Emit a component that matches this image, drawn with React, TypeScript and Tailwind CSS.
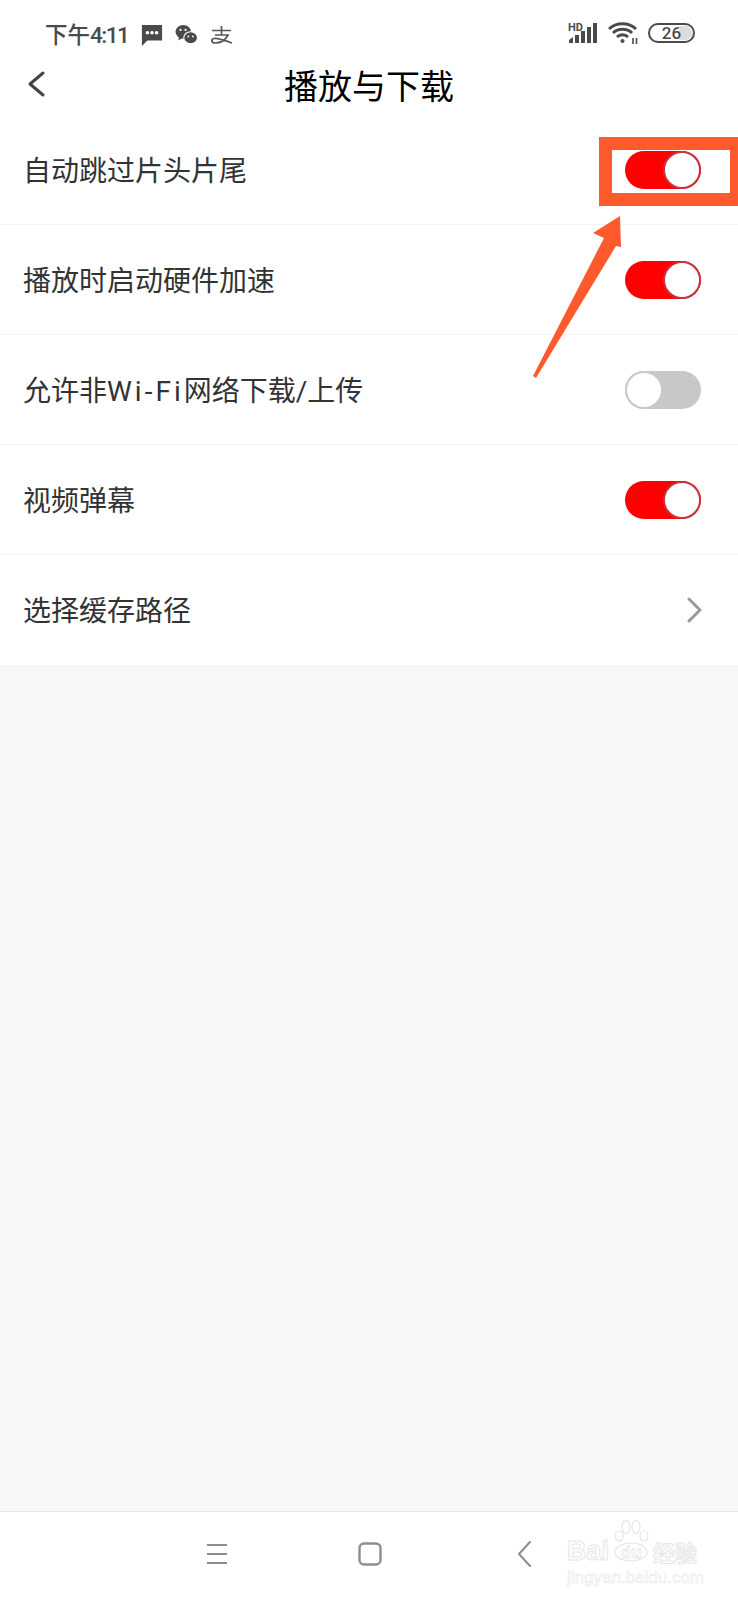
const Toggle = ({ on }: { on: boolean }) => (
    <div className={`flex h-[38px] w-[76px] rounded-full ${on ? "justify-end bg-[#ff0000]" : "justify-start bg-[#c8c8c8]"}`}>
        <div className={`size-[38px] rounded-full border-2 bg-white ${on ? "border-[#c9343c]" : "border-[#c8c8c8]"}`} />
    </div>
);

const rows = [
    { label: <>自动跳过片头片尾</>, on: true },
    { label: <>播放时启动硬件加速</>, on: true },
    { label: <>允许非<span className="tracking-[3px]">Wi-Fi</span>网络下载/上传</>, on: false },
    { label: <>视频弹幕</>, on: true },
];

const App = () => {
    return (
        <div className="relative flex h-[1600px] w-[738px] flex-col overflow-hidden bg-[#f7f7f7] font-['Roboto','Noto_Sans_CJK_SC',sans-serif]">
            <div className="flex h-[115px] flex-col bg-white">
                {/* status bar */}
                <div className="flex h-[64px] items-start justify-between pl-[45px] pr-[43px] pt-[20px] text-[#4a4a4a]">
                    <div className="flex items-center">
                        <span className="text-[22.5px] font-medium leading-[30px]">下午<span className="tracking-[-1.5px]">4:11</span></span>
                        <svg className="ml-[13px]" width="22" height="22" viewBox="0 0 24 24" fill="#4a4a4a">
                            <path d="M1 1h22v17H7l-6 6z" />
                            <circle cx="7" cy="9.500" r="2" fill="#fff" />
                            <circle cx="12" cy="9.500" r="2" fill="#fff" />
                            <circle cx="17" cy="9.500" r="2" fill="#fff" />
                        </svg>
                        <svg className="ml-[12px]" width="23" height="22" viewBox="0 0 24 24" fill="#4a4a4a">
                            <ellipse cx="8.500" cy="8.500" rx="8.500" ry="7.500" />
                            <path d="M4 13l-1 5 5-3z" />
                            <ellipse cx="16.500" cy="15" rx="7.500" ry="6.500" stroke="#fff" strokeWidth="1.200" />
                            <circle cx="5.500" cy="6.500" r="1.200" fill="#fff" />
                            <circle cx="11" cy="6.500" r="1.200" fill="#fff" />
                            <circle cx="14" cy="13.500" r="1" fill="#fff" />
                            <circle cx="19" cy="13.500" r="1" fill="#fff" />
                        </svg>
                        <svg className="ml-[12px]" width="23" height="19" viewBox="0 0 23 19" fill="none" stroke="#555" strokeWidth="1.700">
                            <path d="M2 4.500h19M11.500 0v9M5 9h13c-2 4-6 8-13 8c-4 0-4-4-1-4.500c4-.5 11 2 18 4.500" />
                        </svg>
                    </div>
                    <div className="mt-[1px] flex items-center">
                        <svg width="30" height="22" viewBox="0 0 30 22" fill="#4a4a4a">
                            <text x="0" y="8.500" fontSize="11" fontWeight="700" fontFamily="Roboto">HD</text>
                            <path d="M1 18l4-3v6H1zM7 13h4v8H7zM13 9h4v12h-4zM19 5h4v16h-4zM25 1h4v20h-4z" />
                        </svg>
                        <svg className="ml-[10px]" width="30" height="24" viewBox="0 0 30 24" fill="none" stroke="#4a4a4a" strokeWidth="3">
                            <path d="M1 8c7-7 20-7 27 0M5 12c5-5 14-5 19 0M9 16c3-3 8-3 11 0" />
                            <circle cx="14.500" cy="20" r="1.600" fill="#4a4a4a" strokeWidth="1" />
                            <path d="M25 17v6M28.500 17v6" strokeWidth="1.600" />
                        </svg>
                        <div className="relative ml-[10px] flex h-[20px] w-[47px] items-center justify-center overflow-hidden rounded-full border-[2px] border-[#4a4a4a]">
                            <div className="absolute inset-y-[1px] right-[1px] w-[13px] rounded-r-full bg-[#dcdcdc]" />
                            <span className="relative text-[17px] font-medium leading-none">26</span>
                        </div>
                    </div>
                </div>
                {/* title bar */}
                <div className="relative flex flex-1 items-start justify-center">
                    <svg className="absolute left-[26px] top-[6px]" width="20" height="28" viewBox="0 0 20 28" fill="none" stroke="#444" strokeWidth="3" strokeLinecap="round" strokeLinejoin="round">
                        <path d="M17 3L4 14l13 11" />
                    </svg>
                    <h1 className="text-[34px] leading-[46px] text-black">播放与下载</h1>
                </div>
            </div>

            <div className="bg-white">
                {rows.map((row, i) => (
                    <div key={i} className="flex h-[110px] items-center justify-between border-b border-[#f2f2f2] pl-[23px] pr-[37px]">
                        <span className="pt-1 text-[28px] text-[#333]">{row.label}</span>
                        <Toggle on={row.on} />
                    </div>
                ))}
                <div className="flex h-[110px] items-center justify-between pl-[23px] pr-[36px]">
                    <span className="pt-1 text-[28px] text-[#333]">选择缓存路径</span>
                    <svg width="16" height="26" viewBox="0 0 16 26" fill="none" stroke="#9a9a9a" strokeWidth="3" strokeLinecap="round" strokeLinejoin="round">
                        <path d="M3 2l11 11L3 24" />
                    </svg>
                </div>
            </div>

            <div className="flex-1" />

            {/* nav bar */}
            <div className="flex h-[89px] items-center border-t border-[#e5e5e5] bg-white pb-[4px]">
                <svg className="ml-[206px]" width="22" height="22" viewBox="0 0 22 22" fill="none" stroke="#8e8e8e" strokeWidth="2">
                    <path d="M1 2h20M1 11h20M1 20h20" />
                </svg>
                <svg className="ml-[130px]" width="24" height="24" viewBox="0 0 24 24" fill="none" stroke="#8e8e8e" strokeWidth="2.400">
                    <rect x="1.500" y="1.500" width="21" height="21" rx="4.500" />
                </svg>
                <svg className="ml-[135px]" width="14" height="26" viewBox="0 0 14 26" fill="none" stroke="#8e8e8e" strokeWidth="2" strokeLinecap="round" strokeLinejoin="round">
                    <path d="M13 1L2 13l11 12" />
                </svg>
            </div>

            {/* annotation */}
            <div className="absolute left-[599px] top-[137px] h-[69px] w-[139px] border-y-[13px] border-l-[13px] border-r-[8px] border-[#ff5a2e]" />
            <svg className="absolute left-[525px] top-[210px]" width="105" height="175" viewBox="525 210 105 175" fill="#ff5a2e">
                <path d="M620 216L593 233l11 5-71 138 3 2 80-132 5 1z" />
            </svg>

            {/* watermark */}
            <div className="absolute left-[567px] top-[1518px] flex w-[132px] flex-col font-['Liberation_Sans',sans-serif] text-transparent [-webkit-text-stroke:1px_#e6e6e6]">
                <div className="flex h-[46px] items-end">
                    <span className="text-[27px] font-bold leading-[26px]">Bai</span>
                    <svg className="ml-[3px]" width="38" height="46" viewBox="0 0 38 46" fill="none" stroke="#e6e6e6" strokeWidth="1.200">
                        <ellipse cx="14" cy="9" rx="4" ry="6.500" />
                        <ellipse cx="24" cy="9" rx="4" ry="6.500" />
                        <ellipse cx="7" cy="18" rx="4" ry="5" />
                        <ellipse cx="32" cy="18" rx="4" ry="5" />
                        <ellipse cx="19" cy="34" rx="16" ry="9" />
                        <text x="19" y="40" textAnchor="middle" fontSize="17" fontWeight="700" fontFamily="Liberation Sans" strokeWidth="0.800">du</text>
                    </svg>
                    <span className="ml-[3px] font-['Noto_Sans_CJK_SC',sans-serif] text-[22px] font-bold leading-[26px]">经验</span>
                </div>
                <div className="mt-[5px] text-[17px] leading-[18px] [-webkit-text-stroke:0.5px_#e6e6e6]">jingyan.baidu.com</div>
            </div>
        </div>
    );
};

export default App;
